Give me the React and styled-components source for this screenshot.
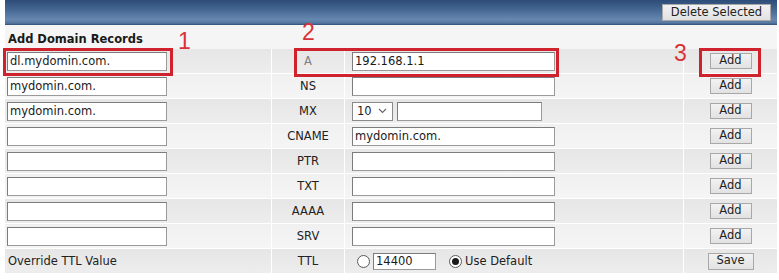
import React from "react";
import styled, { createGlobalStyle } from "styled-components";

const Global = createGlobalStyle`
  html, body { margin: 0; padding: 0; background: #ffffff; }
  body { font-family: "DejaVu Sans", Verdana, sans-serif; font-size: 11.5px; color: #222; }
  * { box-sizing: border-box; }
`;

const Page = styled.div`
  position: relative;
  width: 779px;
  height: 280px;
  padding: 0 2px 0 5px;
`;

const HeaderBar = styled.div`
  height: 25px;
  display: flex;
  align-items: flex-start;
  justify-content: flex-end;
  padding: 4px 6px 0 0;
  background: linear-gradient(to bottom, #2d4d78 0%, #42648f 35%, #6587b0 78%, #57779f 92%, #2f4f79 100%);
`;

const Button = styled.button`
  font-family: "DejaVu Sans", Verdana, sans-serif;
  font-size: 11.5px;
  color: #222;
  background: linear-gradient(to bottom, #f2f2f2, #e2e2e2);
  border: 1px solid #a8a8a8;
  border-radius: 0;
  height: ${(p) => p.$h || 16}px;
  width: ${(p) => p.$w}px;
  padding: 0;
  line-height: 1;
  cursor: pointer;
`;

const TitleRow = styled.div`
  height: 24px;
  background: #f5f5f5;
  display: flex;
  align-items: flex-end;
  padding: 0 0 3px 3px;
  font-weight: bold;
  font-size: 11.5px;
  color: #1a1a1a;
`;

const Table = styled.div`
  display: grid;
  grid-template-columns: 267px 73px 339px 93px;
  grid-auto-rows: 25px;
`;

const Cell = styled.div`
  display: flex;
  align-items: center;
  justify-content: ${(p) => (p.$center ? "center" : "flex-start")};
  padding-left: ${(p) => p.$pl || 0}px;
  border-right: ${(p) => (p.$last ? "none" : "1px solid #ffffff")};
  border-bottom: 1px solid #ffffff;
  background: ${(p) =>
    p.$odd
      ? "linear-gradient(to bottom, #e6e6e6, #ededed)"
      : "linear-gradient(to bottom, #f0f0f0, #f5f5f5)"};
  color: ${(p) => (p.$muted ? "#808080" : "#222")};
  font-size: 11.5px;
  white-space: nowrap;
`;

const TextInput = styled.input`
  width: ${(p) => p.$w}px;
  height: ${(p) => p.$h || 19}px;
  border: 1px solid #9a9a9a;
  border-top-color: #7c7c7c;
  border-left-color: #7c7c7c;
  background: #fff;
  font-family: "DejaVu Sans", Verdana, sans-serif;
  font-size: 11.5px;
  color: #1a1a1a;
  padding: 0 2px;
  margin: 0 0 0 ${(p) => p.$ml || 0}px;
  outline: none;
`;

const SelectBox = styled.div`
  width: 41px;
  height: 19px;
  border: 1px solid #8a8a8a;
  background: #fff;
  display: flex;
  align-items: center;
  justify-content: space-between;
  padding: 0 5px 0 4px;
  margin-right: 4px;
  font-size: 11.5px;
`;

const Radio = styled.span`
  width: 13px;
  height: 13px;
  border-radius: 50%;
  border: 1px solid #5a5a5a;
  background: #fff;
  display: inline-flex;
  align-items: center;
  justify-content: center;
  margin: ${(p) => p.$m || "0"};
  &::after {
    content: "";
    width: 7px;
    height: 7px;
    border-radius: 50%;
    background: ${(p) => (p.$checked ? "#1a1a1a" : "transparent")};
  }
`;

const RadioLabel = styled.span`
  margin-left: 3px;
  font-size: 11.5px;
`;

const Mark = styled.div`
  position: absolute;
  left: ${(p) => p.$x}px;
  top: ${(p) => p.$y}px;
  width: ${(p) => p.$w}px;
  height: ${(p) => p.$h}px;
  border: 3px solid #d0222d;
  pointer-events: none;
`;

const Num = styled.div`
  position: absolute;
  left: ${(p) => p.$x}px;
  top: ${(p) => p.$y}px;
  font-family: "Liberation Sans", Arial, sans-serif;
  font-size: 23px;
  line-height: 22px;
  color: #d8313a;
`;

const rows = [
  { name: "dl.mydomin.com.", type: "A", value: "192.168.1.1", muted: true },
  { name: "mydomin.com.", type: "NS", value: "" },
  { name: "mydomin.com.", type: "MX", mx: true },
  { name: "", type: "CNAME", value: "mydomin.com." },
  { name: "", type: "PTR", value: "" },
  { name: "", type: "TXT", value: "" },
  { name: "", type: "AAAA", value: "" },
  { name: "", type: "SRV", value: "" },
];

const Chevron = () => (
  <svg width="9" height="6" viewBox="0 0 9 6">
    <path d="M1 1l3.5 3.5L8 1" fill="none" stroke="#666" strokeWidth="1.1" />
  </svg>
);

export default function App() {
  return (
    <>
      <Global />
      <Page>
        <HeaderBar>
          <Button $w={109} $h={17}>Delete Selected</Button>
        </HeaderBar>
        <TitleRow>Add Domain Records</TitleRow>
        <Table>
          {rows.map((r, i) => {
            const odd = i % 2 === 0;
            return (
              <React.Fragment key={r.type}>
                <Cell $odd={odd} $pl={2}>
                  <TextInput $w={160} defaultValue={r.name} />
                </Cell>
                <Cell $odd={odd} $center $muted={r.muted}>{r.type}</Cell>
                <Cell $odd={odd} $pl={7}>
                  {r.mx ? (
                    <>
                      <SelectBox>
                        <span>10</span>
                        <Chevron />
                      </SelectBox>
                      <TextInput $w={145} defaultValue="" />
                    </>
                  ) : (
                    <TextInput $w={203} defaultValue={r.value} />
                  )}
                </Cell>
                <Cell $odd={odd} $center $last>
                  <Button $w={42} $h={16}>Add</Button>
                </Cell>
              </React.Fragment>
            );
          })}
          <Cell $odd $pl={3}>Override TTL Value</Cell>
          <Cell $odd $center>TTL</Cell>
          <Cell $odd $pl={12}>
            <Radio />
            <TextInput $w={63} $h={17} $ml={3} defaultValue="14400" />
            <Radio $checked $m="0 0 0 13px" />
            <RadioLabel>Use Default</RadioLabel>
          </Cell>
          <Cell $odd $center $last>
            <Button $w={46} $h={17}>Save</Button>
          </Cell>
        </Table>
        <Mark $x={3} $y={48} $w={170} $h={28} />
        <Num $x={178} $y={30}>1</Num>
        <Mark $x={294} $y={48} $w={265} $h={29} />
        <Num $x={302} $y={21}>2</Num>
        <Mark $x={699} $y={48} $w={62} $h={29} />
        <Num $x={674} $y={42}>3</Num>
      </Page>
    </>
  );
}
